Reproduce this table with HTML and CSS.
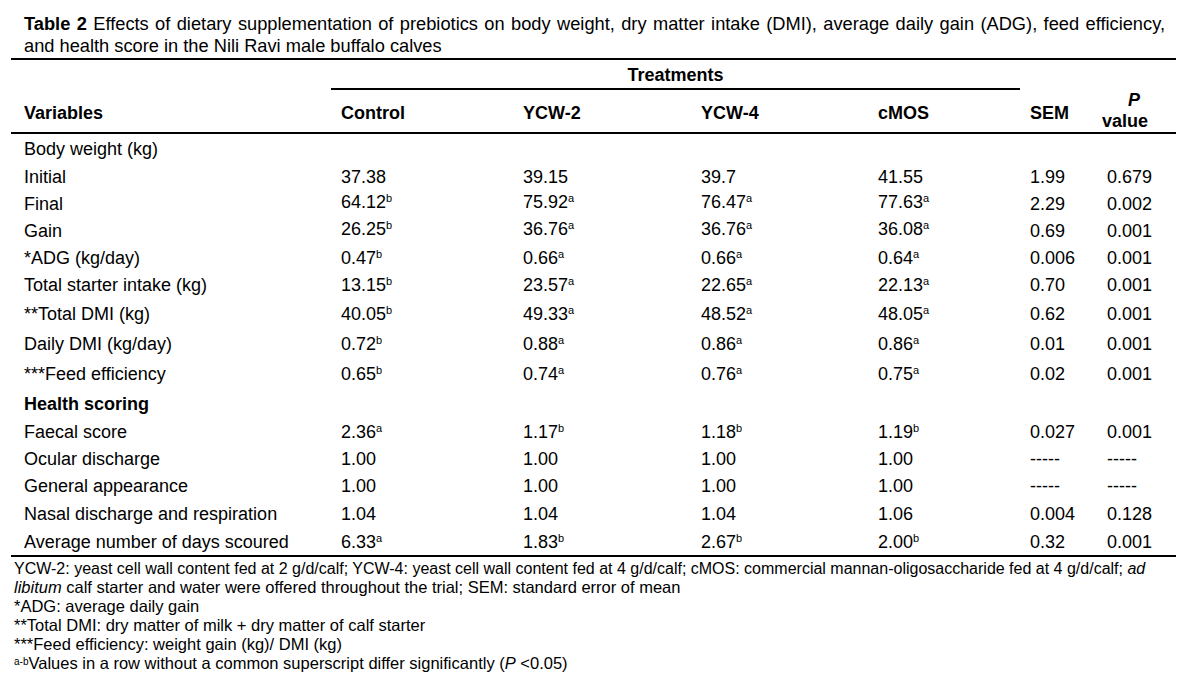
FILE: index.html
```html
<!DOCTYPE html>
<html lang="en">
<head>
<meta charset="utf-8">
<title>Table 2</title>
<link rel="stylesheet" href="styles.css">
</head>
<body>
<div class="page">
  <p class="caption"><span class="cap-line"><b>Table 2</b> Effects of dietary supplementation of prebiotics on body weight, dry matter intake (DMI), average daily gain (ADG), feed efficiency,</span>and health score in the Nili Ravi male buffalo calves</p>
  <table class="data">
    <colgroup>
      <col class="c-var"><col class="c-ctl"><col class="c-y2"><col class="c-y4"><col class="c-cm"><col class="c-sem"><col class="c-p">
    </colgroup>
    <thead>
      <tr class="h1">
        <th rowspan="2" class="lbl">Variables</th>
        <th colspan="4" class="treat">Treatments</th>
        <th rowspan="2" class="sem">SEM</th>
        <th rowspan="2" class="pv"><span class="pbox"><i>P</i><br>value</span></th>
      </tr>
      <tr class="h2">
        <th>Control</th>
        <th>YCW-2</th>
        <th>YCW-4</th>
        <th class="cm">cMOS</th>
      </tr>
    </thead>
    <tbody>
      <tr class="first"><td class="lbl">Body weight (kg)</td><td></td><td></td><td></td><td class="cm"></td><td></td><td></td></tr>
      <tr><td class="lbl">Initial</td><td>37.38</td><td>39.15</td><td>39.7</td><td class="cm">41.55</td><td>1.99</td><td>0.679</td></tr>
      <tr><td class="lbl">Final</td><td class="up">64.12<sup>b</sup></td><td class="up">75.92<sup>a</sup></td><td class="up">76.47<sup>a</sup></td><td class="cm up">77.63<sup>a</sup></td><td>2.29</td><td>0.002</td></tr>
      <tr><td class="lbl">Gain</td><td class="up">26.25<sup>b</sup></td><td class="up">36.76<sup>a</sup></td><td class="up">36.76<sup>a</sup></td><td class="cm up">36.08<sup>a</sup></td><td>0.69</td><td>0.001</td></tr>
      <tr><td class="lbl">*ADG (kg/day)</td><td>0.47<sup>b</sup></td><td>0.66<sup>a</sup></td><td>0.66<sup>a</sup></td><td class="cm">0.64<sup>a</sup></td><td>0.006</td><td>0.001</td></tr>
      <tr class="mid"><td class="lbl">Total starter intake (kg)</td><td>13.15<sup>b</sup></td><td>23.57<sup>a</sup></td><td>22.65<sup>a</sup></td><td class="cm">22.13<sup>a</sup></td><td>0.70</td><td>0.001</td></tr>
      <tr class="tall"><td class="lbl">**Total DMI (kg)</td><td>40.05<sup>b</sup></td><td>49.33<sup>a</sup></td><td>48.52<sup>a</sup></td><td class="cm">48.05<sup>a</sup></td><td>0.62</td><td>0.001</td></tr>
      <tr class="tall"><td class="lbl">Daily DMI (kg/day)</td><td>0.72<sup>b</sup></td><td>0.88<sup>a</sup></td><td>0.86<sup>a</sup></td><td class="cm">0.86<sup>a</sup></td><td>0.01</td><td>0.001</td></tr>
      <tr class="tall"><td class="lbl">***Feed efficiency</td><td>0.65<sup>b</sup></td><td>0.74<sup>a</sup></td><td>0.76<sup>a</sup></td><td class="cm">0.75<sup>a</sup></td><td>0.02</td><td>0.001</td></tr>
      <tr class="mid2"><td class="lbl"><b>Health scoring</b></td><td></td><td></td><td></td><td class="cm"></td><td></td><td></td></tr>
      <tr><td class="lbl">Faecal score</td><td>2.36<sup>a</sup></td><td>1.17<sup>b</sup></td><td>1.18<sup>b</sup></td><td class="cm">1.19<sup>b</sup></td><td>0.027</td><td>0.001</td></tr>
      <tr><td class="lbl">Ocular discharge</td><td>1.00</td><td>1.00</td><td>1.00</td><td class="cm">1.00</td><td>-----</td><td>-----</td></tr>
      <tr class="mid"><td class="lbl">General appearance</td><td>1.00</td><td>1.00</td><td>1.00</td><td class="cm">1.00</td><td>-----</td><td>-----</td></tr>
      <tr class="mid"><td class="lbl">Nasal discharge and respiration</td><td>1.04</td><td>1.04</td><td>1.04</td><td class="cm">1.06</td><td>0.004</td><td>0.128</td></tr>
      <tr class="last"><td class="lbl">Average number of days scoured</td><td>6.33<sup>a</sup></td><td>1.83<sup>b</sup></td><td>2.67<sup>b</sup></td><td class="cm">2.00<sup>b</sup></td><td>0.32</td><td>0.001</td></tr>
    </tbody>
  </table>
  <div class="notes">
    <p><span class="note-line">YCW-2: yeast cell wall content fed at 2 g/d/calf; YCW-4: yeast cell wall content fed at 4 g/d/calf; cMOS: commercial mannan-oligosaccharide fed at 4 g/d/calf; <i>ad</i></span><i>libitum</i> calf starter and water were offered throughout the trial; SEM: standard error of mean</p>
    <p>*ADG: average daily gain</p>
    <p>**Total DMI: dry matter of milk + dry matter of calf starter</p>
    <p>***Feed efficiency: weight gain (kg)/ DMI (kg)</p>
    <p><sup class="ab">a-b</sup>Values in a row without a common superscript differ significantly (<i>P</i> &lt;0.05)</p>
  </div>
</div>
</body>
</html>
```

FILE: styles.css
```css
html, body {
  margin: 0;
  padding: 0;
  background: #ffffff;
}

body {
  font-family: "Liberation Sans", Arial, sans-serif;
  color: #000000;
}

.page {
  width: 1190px;
  padding: 13px 0 0 11px;
  box-sizing: border-box;
}

.caption {
  width: 1141px;
  margin: 0 0 1px 13px;
  font-size: 18.25px;
  line-height: 22px;
  white-space: nowrap;
}

.cap-line {
  display: block;
  text-align: justify;
  text-align-last: justify;
  white-space: normal;
}

.data {
  border-collapse: collapse;
  table-layout: fixed;
  width: 1165px;
  font-size: 18px;
  line-height: 21px;
}

.c-var { width: 320px; }
.c-ctl { width: 182px; }
.c-y2 { width: 178px; }
.c-y4 { width: 179px; }
.c-cm { width: 150px; }
.c-sem { width: 77px; }
.c-p { width: 79px; }

.data th,
.data td {
  padding: 3px 0 3px 10px;
  text-align: left;
  white-space: nowrap;
  vertical-align: middle;
}

.data th.cm,
.data td.cm {
  padding-left: 8px;
}

.data .lbl {
  padding-left: 13px;
}

.data thead th {
  font-weight: bold;
  vertical-align: bottom;
}

.data tr.h1 th {
  border-top: 2px solid #000;
}

.data tr.h1 th.treat {
  text-align: center;
  height: 26px;
  padding: 2px 0 0 0;
  vertical-align: middle;
  border-bottom: 2px solid #000;
}

.data thead th.lbl,
.data thead th.sem,
.data tr.h2 th {
  padding-top: 0;
  padding-bottom: 8px;
  border-bottom: 2px solid #000;
}

.data tr.h2 th {
  height: 34px;
}

.data thead th.pv {
  padding: 0 0 0 5px;
  border-bottom: 2px solid #000;
}

.pbox {
  display: inline-block;
  text-align: center;
  line-height: 21px;
}

.pbox i {
  padding-left: 18px;
}

.data tbody td {
  height: 21px;
}

.data tr.first td {
  padding-top: 5px;
  padding-bottom: 4px;
}

.data tr.mid td {
  padding-top: 3px;
  padding-bottom: 4px;
}

.data tr.mid2 td {
  padding-top: 4px;
  padding-bottom: 4px;
}

.data tr.tall td {
  padding-top: 4px;
  padding-bottom: 5px;
}

.data tr.last td {
  padding-top: 3px;
  padding-bottom: 2px;
  border-bottom: 2px solid #000;
}

.data td.up {
  padding-top: 1px;
  padding-bottom: 5px;
}

.data sup {
  font-size: 11px;
  line-height: 0;
  vertical-align: 6px;
}

.notes {
  margin: 2px 0 0 3px;
  font-size: 16.5px;
  line-height: 19px;
  white-space: nowrap;
}

.notes p {
  margin: 0;
}

.note-line {
  display: block;
  font-size: 16px;
}

.notes sup.ab {
  font-size: 10px;
  line-height: 0;
  vertical-align: 4px;
}
```
